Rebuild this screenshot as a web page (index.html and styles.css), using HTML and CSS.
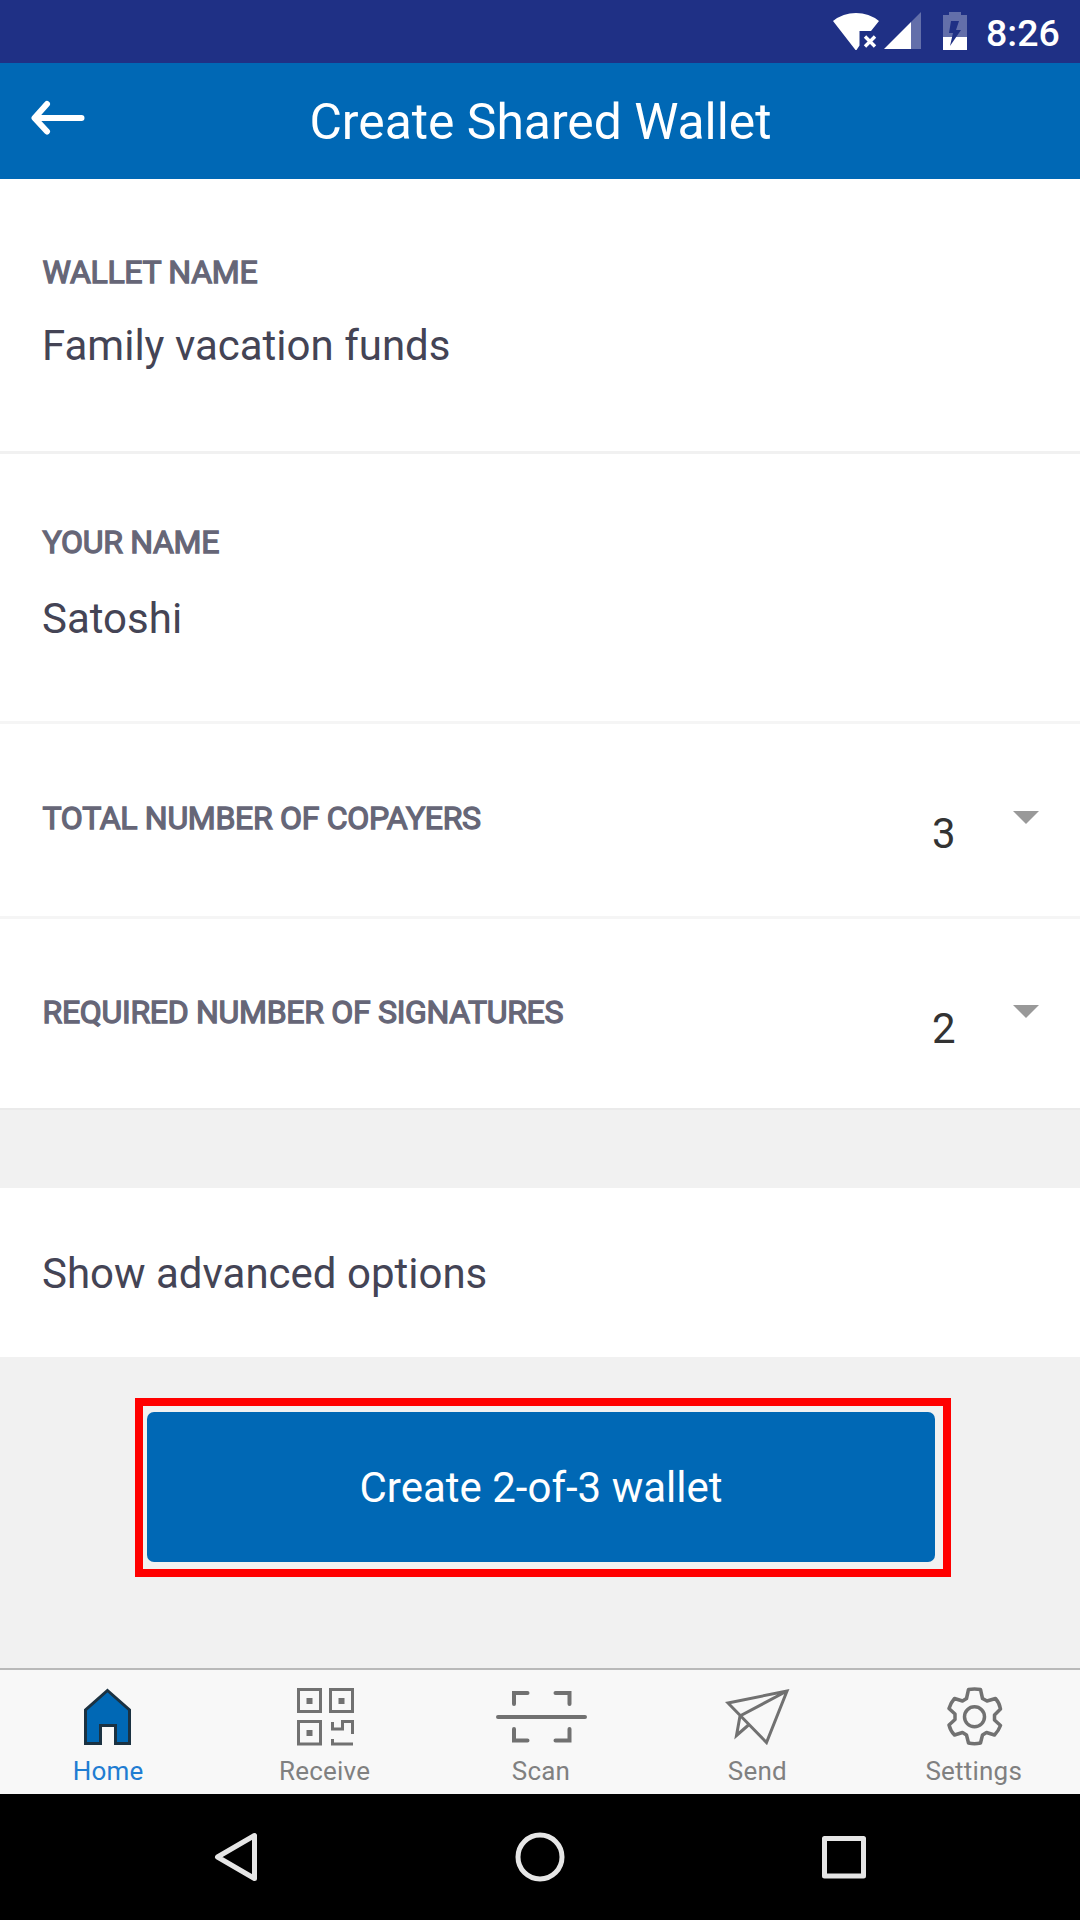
FILE: index.html
```html
<!DOCTYPE html>
<html lang="en">
<head>
<meta charset="utf-8">
<title>Create Shared Wallet</title>
<link rel="stylesheet" href="styles.css">
</head>
<body>
<div class="screen">
  <div class="status-bar">
    <svg class="status-icons" width="136" height="40" viewBox="832 12 136 40">
      <path fill="#fff" d="M833 21Q843 13 856 13T879 21L871 31H859.500V45.500L856.500 50H855.500Z"/>
      <path stroke="#fff" stroke-width="3.400" d="M865 36.500L875 46.500M875 36.500L865 46.500"/>
      <path fill="#636faa" d="M911 22L921 12V49H911Z"/>
      <path fill="#fff" d="M884 49L911 22V49Z"/>
      <path fill="#636faa" d="M943 15H949V12H961V15H967V37H943Z"/>
      <path fill="#fff" d="M943 37H967V50H943Z"/>
      <path fill="#1f3085" d="M951 21H959L956 30H961L950 46L953 33H949Z"/>
    </svg>
    <span class="clock">8:26</span>
  </div>
  <header class="header">
    <svg class="back" width="56" height="36" viewBox="30 100 56 36">
      <path d="M47 104L34.500 118L47 131.500M35 118H81.500" fill="none" stroke="#fff" stroke-width="6" stroke-linecap="round" stroke-linejoin="round"/>
    </svg>
    <h1 class="title">Create Shared Wallet</h1>
  </header>
  <main class="content">
    <section class="field field-wallet">
      <div class="label">WALLET NAME</div>
      <div class="value">Family vacation funds</div>
    </section>
    <section class="field field-name">
      <div class="label">YOUR NAME</div>
      <div class="value">Satoshi</div>
    </section>
    <section class="select-row">
      <span class="label">TOTAL NUMBER OF COPAYERS</span>
      <span class="choice">3</span>
      <span class="caret"></span>
    </section>
    <section class="select-row select-last">
      <span class="label">REQUIRED NUMBER OF SIGNATURES</span>
      <span class="choice">2</span>
      <span class="caret"></span>
    </section>
    <section class="advanced">Show advanced options</section>
    <div class="highlight"><button class="create">Create 2-of-3 wallet</button></div>
  </main>
  <nav class="tabs">
    <div class="tab active">
      <svg width="50" height="60" viewBox="83 1686 50 60"><path d="M107.500 1690.500L129.500 1710V1743.500H115.500V1725.500H100.500V1743.500H85.500V1710Z" fill="#0068b5" stroke="#1b3242" stroke-width="3"/></svg>
      <span>Home</span>
    </div>
    <div class="tab">
      <svg width="60" height="60" viewBox="295 1686 60 60" fill="none" stroke="#717171" stroke-width="3"><path d="M298.500 1689.500H320.500V1711.500H298.500ZM330.500 1689.500H352.500V1711.500H330.500ZM298.500 1721.500H320.500V1744H298.500ZM332.500 1722V1729H342.500V1721.500H352.500V1734M332.500 1739V1744H353"/><path fill="#717171" stroke="none" d="M306.500 1698H312.500V1704H306.500ZM338.500 1698H344.500V1704H338.500ZM306.500 1730H312.500V1736H306.500Z"/></svg>
      <span>Receive</span>
    </div>
    <div class="tab">
      <svg width="94" height="60" viewBox="494.500 1686 94 60" fill="none" stroke="#717171" stroke-width="4" stroke-linecap="round"><path d="M514.500 1704V1693H528M556 1693H570V1704M514.500 1729V1740.500H528M556 1740.500H570V1729M498.500 1717H585.500"/></svg>
      <span>Scan</span>
    </div>
    <div class="tab">
      <svg width="66" height="60" viewBox="724 1686 66 60" fill="none" stroke="#717171" stroke-width="3"><path d="M728 1703L787 1691L766.500 1742.500ZM787 1691L740 1716L736.500 1735.500L748.500 1725"/></svg>
      <span>Send</span>
    </div>
    <div class="tab">
      <svg width="60" height="60" viewBox="944.500 1686 60 60" fill="none" stroke="#717171" stroke-width="3.500" stroke-linejoin="round"><path d="M969 1689.500Q975 1688.500 981 1689.500L983 1698.500L987.500 1701L996 1698.500Q1000 1703 1001 1709L995 1715V1720L1001 1725.500Q999 1731 995 1735L987 1732.500L983 1735L981 1743Q975 1744.500 969 1743L967 1735L963 1732.500L955 1735Q951 1731 949.500 1725L955.500 1719.500V1714L949.500 1708.500Q951 1703 955 1698.500L963 1701L967 1698.500Z"/><circle cx="975" cy="1716.800" r="10"/></svg>
      <span>Settings</span>
    </div>
  </nav>
  <div class="system-nav">
    <svg width="680" height="60" viewBox="200 1827 680 60" fill="none" stroke="#e6e6e6" stroke-width="5" stroke-linejoin="round"><path d="M254.500 1835.500V1878.500L217.500 1857Z"/><circle cx="540" cy="1857" r="22"/><path d="M824.500 1838.500H863.500V1876H824.500Z"/></svg>
  </div>
</div>
</body>
</html>
```
FILE: styles.css
```css
* { box-sizing: border-box; }
body { margin: 0; font-family: Roboto, "Liberation Sans", sans-serif; }
.screen { width: 1080px; height: 1920px; display: flex; flex-direction: column; background: #f1f1f1; overflow: hidden; }
.status-bar { height: 63px; background: #1f3085; display: flex; justify-content: flex-end; padding: 12px 21px 0 0; gap: 18px; }
.clock { color: #fff; font-size: 37.5px; font-weight: 500; line-height: 42px; width: 73px; white-space: nowrap; }
.header { height: 116px; background: #0068b5; display: grid; grid-template-columns: 56px 1fr 56px; padding: 0 30px; }
.back { margin-top: 37px; }
.title { margin: 29px 0 0; padding-left: 1px; color: #fff; font-size: 49.8px; font-weight: 400; line-height: 60px; text-align: center; }
.content { height: 1489px; display: flex; flex-direction: column; }
.field, .select-row { background: #fff; border-bottom: 3px solid #f5f5f5; padding-left: 42px; color: #444455; }
.field-wallet { height: 275px; padding-top: 73px; border-bottom-color: #f1f1f1; }
.field-name { height: 270px; padding-top: 68px; }
.label { color: #666677; font-size: 32px; font-weight: 400; -webkit-text-stroke: 1.3px #666677; line-height: 40px; letter-spacing: -.3px; padding-left: .5px; white-space: nowrap; }
.value { font-size: 42px; line-height: 50px; margin-top: 29px; }
.field-name .value { margin-top: 32px; }
.select-row { height: 195px; display: grid; grid-template-columns: 1fr 81px 67px; align-items: start; }
.select-row .label { margin-top: 74px; }
.select-row.select-last { height: 189px; border: 0; box-shadow: 0 2px #eaeaea; }
.select-last .label { margin-top: 73px; }
.choice { color: #333; font-size: 42px; line-height: 50px; margin-top: 85px; }
.caret { width: 26px; height: 13px; background: #999; clip-path: polygon(0 0, 100% 0, 50% 100%); margin-top: 87px; }
.select-last .caret { margin-top: 86px; }
.advanced { margin-top: 80px; height: 169px; background: #fff; color: #444455; font-size: 42px; line-height: 168px; padding: 2px 0 0 42px; }
.highlight { margin: 41px 0 0 135px; width: 816px; height: 179px; border: 8px solid red; padding: 6px 4px; }
.create { display: block; width: 788px; height: 150px; padding: 1px 0 0; border: 0; border-radius: 7px; background: #0068b5; color: #fff; font: 400 42px/50px Roboto, sans-serif; }
.tabs { height: 126px; border-top: 2px solid #b9b9b9; background: #f8f8f8; display: grid; grid-template-columns: repeat(5, 216.4px); }
.tab { display: flex; flex-direction: column; align-items: center; padding-top: 16px; color: #808080; font-size: 26px; line-height: 32px; letter-spacing: .2px; }
.tab span { margin-top: 9px; }
.tab.active { color: #1f7dd2; }
.system-nav { height: 126px; background: #000; display: flex; justify-content: center; padding-top: 33px; }
```
